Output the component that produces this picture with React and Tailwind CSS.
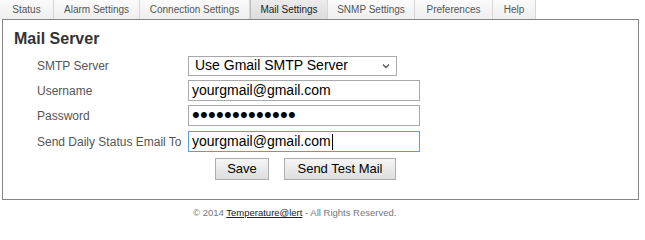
import React from 'react';

const tabs = [
  { label: 'Status', w: 'w-[54px]' },
  { label: 'Alarm Settings', w: 'w-[86px]' },
  { label: 'Connection Settings', w: 'w-[110px]' },
  { label: 'Mail Settings', w: 'w-[78px]', active: true },
  { label: 'SNMP Settings', w: 'w-[87px]' },
  { label: 'Preferences', w: 'w-[78px]' },
  { label: 'Help', w: 'w-[43px]' },
];

// one label + field row of the mail form
const Row = ({ label, children, className = '' }) => (
  <div className={'flex items-center h-[21px] ' + className}>
    <div className="w-[151px] shrink-0 text-[12px] text-[#555]">{label}</div>
    {children}
  </div>
);

const Field = ({ children, focused }) => (
  <div
    className={
      'w-[232px] h-[21px] flex items-center px-[3px] text-[14px] text-black bg-white border ' +
      (focused ? 'border-[#5a9ee0]' : 'border-[#a9a9a9]')
    }
  >
    {children}
  </div>
);

const App = () => {
  return (
    <div className="w-[645px] h-[223px] bg-white font-['Liberation_Sans',Arial,sans-serif]">
      {/* Tab strip */}
      <div className="flex h-[19px]">
        {tabs.map((t) => (
          <div
            key={t.label}
            className={
              t.w +
              ' flex items-center justify-center text-[10px] border-r border-[#d6d6d6] ' +
              (t.active
                ? 'bg-gradient-to-b from-[#ececec] to-[#dcdcdc] text-[#222] border-l border-l-[#bdbdbd]'
                : 'bg-gradient-to-b from-[#fbfbfb] to-[#eeeeee] text-[#555]')
            }
          >
            {t.label}
          </div>
        ))}
      </div>

      {/* Panel */}
      <div className="ml-[2px] w-[637px] h-[181px] border border-[#858585] pt-[9px] pl-[11px]">
        <h2 className="text-[16px] leading-[20px] font-bold text-[#333]">Mail Server</h2>

        <div className="ml-[23px] mt-[6px] flex flex-col gap-[4px]">
          <Row label="SMTP Server">
            <div className="w-[209px] h-[20px] flex items-center justify-between pl-[6px] pr-[6px] text-[14px] text-black border border-[#a9a9a9] bg-white">
              <span>Use Gmail SMTP Server</span>
              <svg width="8" height="6" viewBox="0 0 8 6" className="text-[#555]">
                <path d="M1 1.5 L4 4.5 L7 1.5" fill="none" stroke="currentColor" strokeWidth="1.3" />
              </svg>
            </div>
          </Row>
          <Row label="Username">
            <Field>yourgmail@gmail.com</Field>
          </Row>
          <Row label="Password">
            <Field>
              <span className="text-[22px] leading-none tracking-[0.3px] -mt-[2px]">•••••••••••••</span>
            </Field>
          </Row>
          <Row label="Send Daily Status Email To" className="mt-[1px]">
            <Field focused>
              yourgmail@gmail.com
              <span className="inline-block w-px h-[16px] bg-black ml-px" />
            </Field>
          </Row>
        </div>

        {/* Actions */}
        <div className="flex gap-[15px] mt-[6px] ml-[201px]">
          <button className="w-[54px] h-[22px] text-[13px] text-black border border-[#adadad] bg-gradient-to-b from-[#f6f6f6] to-[#dddddd]">
            Save
          </button>
          <button className="w-[112px] h-[22px] text-[13px] text-black border border-[#adadad] bg-gradient-to-b from-[#f6f6f6] to-[#dddddd]">
            Send Test Mail
          </button>
        </div>
      </div>

      {/* Footer */}
      <p className="mt-[6px] ml-[193px] text-[9.5px] leading-[13px] text-[#777]">
        © 2014 <a href="#" className="text-[#222] underline">Temperature@lert</a> - All Rights Reserved.
      </p>
    </div>
  );
};

export default App;
